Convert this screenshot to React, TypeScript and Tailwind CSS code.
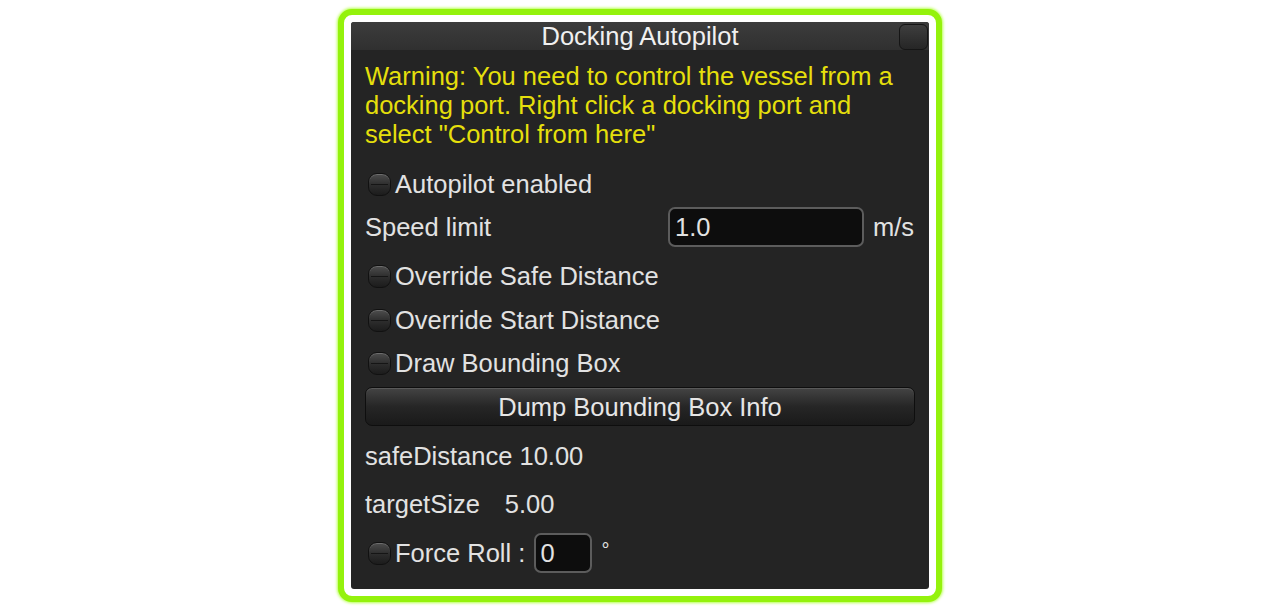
import React, { useState } from 'react';

const Toggle: React.FC<{ on: boolean; onClick: () => void }> = ({ on, onClick }) => (
  <button
    onClick={onClick}
    className="relative h-[23px] w-[23px] shrink-0 rounded-[9px] border border-[#111] bg-gradient-to-b from-[#4e4e4e] via-[#2e2e2e] to-[#1c1c1c] shadow-[inset_0_1px_0_rgba(255,255,255,0.18)]"
  >
    <span className="absolute left-[2px] right-[2px] top-[10px] h-px bg-[#151515]" />
    {on && <span className="absolute inset-[6px] rounded-full bg-[#9f0]" />}
  </button>
);

const App: React.FC = () => {
  const [autopilot, setAutopilot] = useState(false);
  const [safe, setSafe] = useState(false);
  const [start, setStart] = useState(false);
  const [bbox, setBbox] = useState(false);
  const [roll, setRoll] = useState(false);
  const [speed, setSpeed] = useState('1.0');
  const [rollVal, setRollVal] = useState('0');

  return (
    <div className="min-h-screen bg-white pt-[9px] font-['Liberation_Sans',Arial,sans-serif]">
      <div className="mx-auto h-[593px] w-[604px] rounded-[14px] border-[6px] border-[#94f20c] bg-white p-[7px] shadow-[0_0_3px_1px_#b5ff4a]">
        <div className="flex h-full flex-col overflow-hidden rounded-[3px] bg-[#242424] text-[25.5px] text-[#e2e2e2]">
          {/* title bar */}
          <div className="relative flex h-[28px] shrink-0 items-center justify-center bg-gradient-to-b from-[#3c3c3c] to-[#303030]">
            <span className="mt-[2px] leading-none text-[#f0f0f0]">Docking Autopilot</span>
            <div className="absolute right-[1px] top-[2px] h-[26px] w-[29px] rounded-[6px] border border-[#151515] bg-gradient-to-b from-[#3e3e3e] to-[#262626]" />
          </div>

          <div className="flex flex-col px-[14px]">
            <p className="mt-[12px] leading-[29px] text-[#e5df0c]">
              Warning: You need to control the vessel from a docking port. Right click a docking port and select "Control from here"
            </p>

            <div className="mt-[20px] flex h-[30px] items-center gap-[4px] pl-[3px]">
              <Toggle on={autopilot} onClick={() => setAutopilot(!autopilot)} />
              <span>Autopilot enabled</span>
            </div>

            <div className="mt-[8px] flex h-[40px] items-center">
              <span className="flex-1">Speed limit</span>
              <input
                value={speed}
                onChange={(e) => setSpeed(e.target.value)}
                className="h-[40px] w-[196px] rounded-[7px] border-2 border-[#5c5c5c] bg-[#0d0d0d] px-[5px] text-[25.5px] text-[#e2e2e2] outline-none"
              />
              <span className="ml-[9px] w-[42px]">m/s</span>
            </div>

            <div className="mt-[14px] flex h-[30px] items-center gap-[4px] pl-[3px]">
              <Toggle on={safe} onClick={() => setSafe(!safe)} />
              <span>Override Safe Distance</span>
            </div>

            <div className="mt-[14px] flex h-[30px] items-center gap-[4px] pl-[3px]">
              <Toggle on={start} onClick={() => setStart(!start)} />
              <span>Override Start Distance</span>
            </div>

            <div className="mt-[13px] flex h-[30px] items-center gap-[4px] pl-[3px]">
              <Toggle on={bbox} onClick={() => setBbox(!bbox)} />
              <span>Draw Bounding Box</span>
            </div>

            <button className="mt-[9px] h-[39px] w-full rounded-[7px] border border-[#0e0e0e] bg-gradient-to-b from-[#444] via-[#262626] to-[#1a1a1a] text-[25.5px] text-[#e6e6e6] shadow-[inset_0_1px_0_rgba(255,255,255,0.12)]">
              Dump Bounding Box Info
            </button>

            <div className="mt-[15px] flex h-[30px] items-center">
              <span>safeDistance 10.00</span>
            </div>

            <div className="mt-[18px] flex h-[30px] items-center">
              <span>targetSize</span>
              <span className="ml-[25px]">5.00</span>
            </div>

            <div className="mt-[14px] flex h-[40px] items-center pl-[3px]">
              <Toggle on={roll} onClick={() => setRoll(!roll)} />
              <span className="ml-[4px]">Force Roll :</span>
              <input
                value={rollVal}
                onChange={(e) => setRollVal(e.target.value)}
                className="ml-[9px] h-[40px] w-[58px] rounded-[7px] border-2 border-[#5c5c5c] bg-[#0d0d0d] px-[4px] text-[25.5px] text-[#e2e2e2] outline-none"
              />
              <span className="ml-[9px] -mt-[6px] text-[20px]">°</span>
            </div>
          </div>
        </div>
      </div>
    </div>
  );
};

export default App;
